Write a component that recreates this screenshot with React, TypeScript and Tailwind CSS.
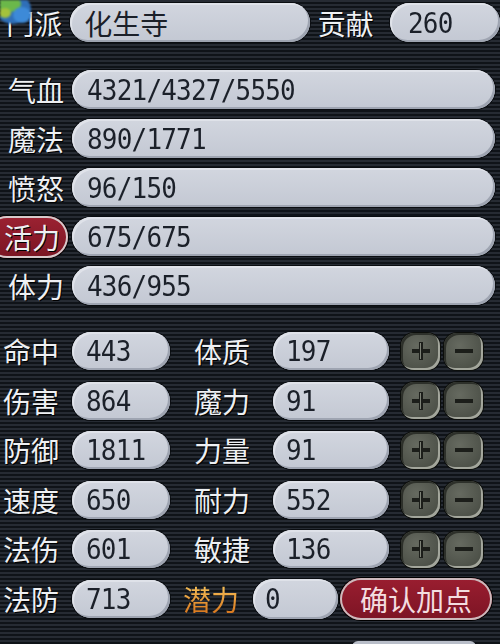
import React from 'react';

// Character attribute panel: base info rows, combat stats and point allocation
const labelFont = { fontFamily: '"Noto Sans CJK SC", "Noto Sans", sans-serif' };
const valueFont = { fontFamily: '"DejaVu Sans Mono", "Noto Sans CJK SC", monospace' };

interface Bar {
  label: string;
  value: string;
  active?: boolean;
}

const bars: Bar[] = [
  { label: '气血', value: '4321/4327/5550' },
  { label: '魔法', value: '890/1771' },
  { label: '愤怒', value: '96/150' },
  { label: '活力', value: '675/675', active: true },
  { label: '体力', value: '436/955' },
];

interface StatRow {
  label: string;
  value: string;
  attr?: string;
  attrValue?: string;
}

const stats: StatRow[] = [
  { label: '命中', value: '443', attr: '体质', attrValue: '197' },
  { label: '伤害', value: '864', attr: '魔力', attrValue: '91' },
  { label: '防御', value: '1811', attr: '力量', attrValue: '91' },
  { label: '速度', value: '650', attr: '耐力', attrValue: '552' },
  { label: '法伤', value: '601', attr: '敏捷', attrValue: '136' },
];

const fieldCls =
  'flex items-center rounded-full bg-[linear-gradient(to_bottom,#d2d6df,#c3c8d3)] shadow-[inset_-2px_-2px_0_#9ea4b1,inset_2px_2px_0_#dfe2e9,0_0_0_1px_#0a0d11] text-[#1b2029]';

const Label: React.FC<{ text: string; className?: string }> = ({ text, className = '' }) => (
  <div
    className={`flex items-center justify-end text-[28px] leading-none text-[#eef0f3] whitespace-nowrap [text-shadow:1px_1px_0_#000] ${className}`}
    style={labelFont}
  >
    {text}
  </div>
);

const Value: React.FC<{ text: string }> = ({ text }) => (
  <span className="inline-block origin-left scale-y-[1.1] text-[26px] leading-none tracking-[-0.8px]" style={valueFont}>
    {text}
  </span>
);

const StepButton: React.FC<{ minus?: boolean }> = ({ minus }) => (
  <div className="flex h-[37px] w-[39px] items-center justify-center rounded-[13px] bg-[radial-gradient(circle_at_40%_35%,#666a60,#43473f)] shadow-[inset_-2px_-2px_0_#a3a69c,inset_2px_2px_0_#2d302a,0_0_0_1px_#0c0e0b]">
    <svg width="22" height="22" viewBox="0 0 22 22">
      {!minus && <rect x="9" y="2" width="4" height="18" fill="#1c1e1a" />}
      <rect x="2" y="9" width="18" height="4" fill="#1c1e1a" />
      {!minus && <rect x="10" y="3" width="1" height="16" fill="#7d8176" />}
    </svg>
  </div>
);

export default function App() {
  return (
    <div className="relative h-[644px] w-[500px] overflow-hidden bg-[repeating-linear-gradient(to_bottom,#262b33_0px,#262b33_2px,#0f1318_2px,#0f1318_4px)]">
      {/* sect emblem peeking in at the corner */}
      <svg className="absolute left-0 top-0 blur-[1px]" width="36" height="32" viewBox="0 0 36 32">
        <ellipse cx="13" cy="9" rx="18" ry="15" fill="#2f6fb8" />
        <ellipse cx="9" cy="4" rx="12" ry="8" fill="#6bb84a" />
        <ellipse cx="22" cy="15" rx="9" ry="8" fill="#3d8ad8" />
        <ellipse cx="5" cy="13" rx="6" ry="5" fill="#a4c23c" />
      </svg>

      <div className="flex flex-col pt-[3px]">
        {/* sect + contribution */}
        <div className="flex h-[39px] items-center">
          <Label text="门派" className="w-[72px] pr-[8px]" />
          <div className={`${fieldCls} h-[39px] w-[246px] pl-[14px]`}>
            <span className="text-[28px] leading-none" style={labelFont}>化生寺</span>
          </div>
          <Label text="贡献" className="ml-[8px] w-[62px] justify-start" />
          <div className={`${fieldCls} ml-[12px] h-[39px] w-[110px] shrink-0 pl-[18px]`}>
            <Value text="260" />
          </div>
        </div>

        {/* resource bars */}
        <div className="mt-[28px] flex flex-col gap-[10px]">
          {bars.map(b => (
            <div key={b.label} className="flex h-[39px] items-center">
              {b.active ? (
                <div className="-ml-[14px] mr-[4px] flex h-[42px] w-[82px] shrink-0 items-center justify-end rounded-full bg-[linear-gradient(to_bottom,#9c2232,#7a1522)] pr-[8px] shadow-[inset_0_0_0_2px_#d7c9cb,0_0_0_1px_#000]">
                  <Label text={b.label} />
                </div>
              ) : (
                <Label text={b.label} className="w-[72px] pr-[8px]" />
              )}
              <div className={`${fieldCls} h-[39px] w-[423px] pl-[15px]`}>
                <Value text={b.value} />
              </div>
            </div>
          ))}
        </div>

        {/* combat stats and attribute points */}
        <div className="mt-[27px] flex flex-col gap-[11.5px]">
          {stats.map(s => (
            <div key={s.label} className="flex h-[38px] items-center">
              <Label text={s.label} className="w-[72px] pr-[13px]" />
              <div className={`${fieldCls} h-[38px] w-[98px] pl-[14px]`}>
                <Value text={s.value} />
              </div>
              <Label text={s.attr!} className="ml-[24px] w-[64px] justify-start" />
              <div className={`${fieldCls} ml-[15px] h-[38px] w-[116px] pl-[13px]`}>
                <Value text={s.attrValue!} />
              </div>
              <div className="ml-[12px] flex gap-[4px]">
                <StepButton />
                <StepButton minus />
              </div>
            </div>
          ))}

          <div className="flex h-[38px] items-center">
            <Label text="法防" className="w-[72px] pr-[13px]" />
            <div className={`${fieldCls} h-[38px] w-[98px] pl-[14px]`}>
              <Value text="713" />
            </div>
            <div
              className="ml-[13px] w-[66px] text-[28px] leading-none text-transparent bg-clip-text bg-[linear-gradient(to_bottom,#f7c25a,#d9781e)]"
              style={labelFont}
            >
              潜力
            </div>
            <div className={`${fieldCls} ml-[4px] h-[40px] w-[85px] pl-[12px]`}>
              <Value text="0" />
            </div>
            <button
              className="ml-[2px] flex h-[42px] w-[152px] items-center justify-center rounded-full bg-[linear-gradient(to_bottom,#9a1e30,#7c1424)] text-[28px] leading-none text-[#f3dde0] shadow-[inset_0_0_0_2px_#cdb9bc,0_0_0_1px_#000]"
              style={labelFont}
            >
              确认加点
            </button>
          </div>
        </div>
      </div>

      {/* top edge of the next field below the fold */}
      <div className="absolute left-[352px] top-[641px] h-[10px] w-[124px] rounded-t-[6px] bg-[#b9bec9]" />
    </div>
  );
}
